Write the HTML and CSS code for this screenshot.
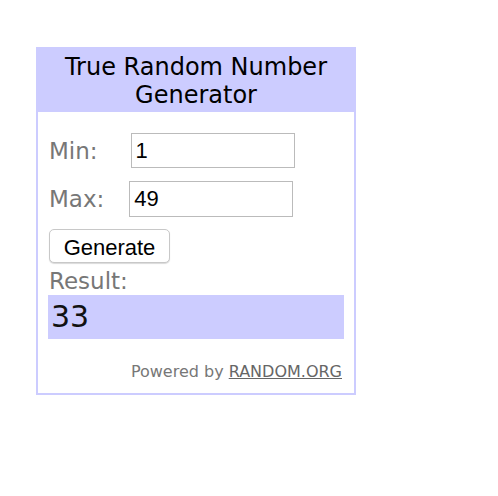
FILE: index.html
```html
<!DOCTYPE html>
<html>
<head>
<meta charset="utf-8">
<link rel="stylesheet" href="styles.css">
</head>
<body>
<div class="widget">
  <div class="header">True Random Number<br>Generator</div>
  <div class="content">
    <div class="row">
      <span class="label">Min:</span>
      <input class="field field-min" type="text" value="1">
    </div>
    <div class="row">
      <span class="label">Max:</span>
      <input class="field field-max" type="text" value="49">
    </div>
    <button class="btn" type="button">Generate</button>
    <div class="result-label">Result:</div>
    <div class="result">33</div>
    <div class="powered">Powered by <a class="link" href="#">RANDOM.ORG</a></div>
  </div>
</div>
</body>
</html>
```
FILE: styles.css
```css
html, body {
  margin: 0;
  padding: 0;
  background: #fff;
}
body {
  font-family: "DejaVu Sans", Verdana, sans-serif;
}
.widget {
  box-sizing: border-box;
  width: 320px;
  margin: 47px 0 0 36px;
  border: 2px solid #ccccff;
}
.header {
  background: #ccccff;
  color: #000;
  text-align: center;
  font-size: 24px;
  line-height: 28px;
  padding: 4px 0 3px;
}
.content {
  padding: 21px 10px 12px 11px;
}
.row {
  display: flex;
  align-items: center;
  height: 35px;
  margin-bottom: 13px;
}
.label {
  color: #777;
  font-size: 23px;
  line-height: 26px;
}
.field {
  box-sizing: border-box;
  height: 35px;
  width: 164px;
  border: 1px solid #bbb;
  border-radius: 0;
  padding: 0 4px;
  margin: 0;
  font-family: "Liberation Sans", Arial, sans-serif;
  font-size: 22px;
  color: #000;
  background: #fff;
  outline: none;
}
.field-min { margin-left: 33px; }
.field-max { margin-left: 25px; height: 36px; }
.btn {
  display: block;
  box-sizing: border-box;
  width: 121px;
  height: 34px;
  margin: 11px 0 0 0;
  padding: 3px 0 0 0;
  background: #fff;
  border: 1px solid #c8c8c8;
  border-radius: 5px;
  box-shadow: 0 1px 1px rgba(0, 0, 0, 0.15);
  font-family: "Liberation Sans", Arial, sans-serif;
  font-size: 22px;
  color: #000;
}
.result-label {
  color: #777;
  font-size: 23px;
  line-height: 26px;
  margin-top: 5px;
}
.result {
  background: #ccccff;
  color: #111;
  font-size: 30px;
  line-height: 44px;
  height: 44px;
  padding-left: 3px;
  margin: 1px 0 0 -1px;
}
.powered {
  text-align: right;
  color: #777;
  font-size: 16px;
  line-height: 19px;
  margin-top: 23px;
  padding-right: 2px;
}
.link {
  color: #666;
  text-decoration: underline;
}
```
